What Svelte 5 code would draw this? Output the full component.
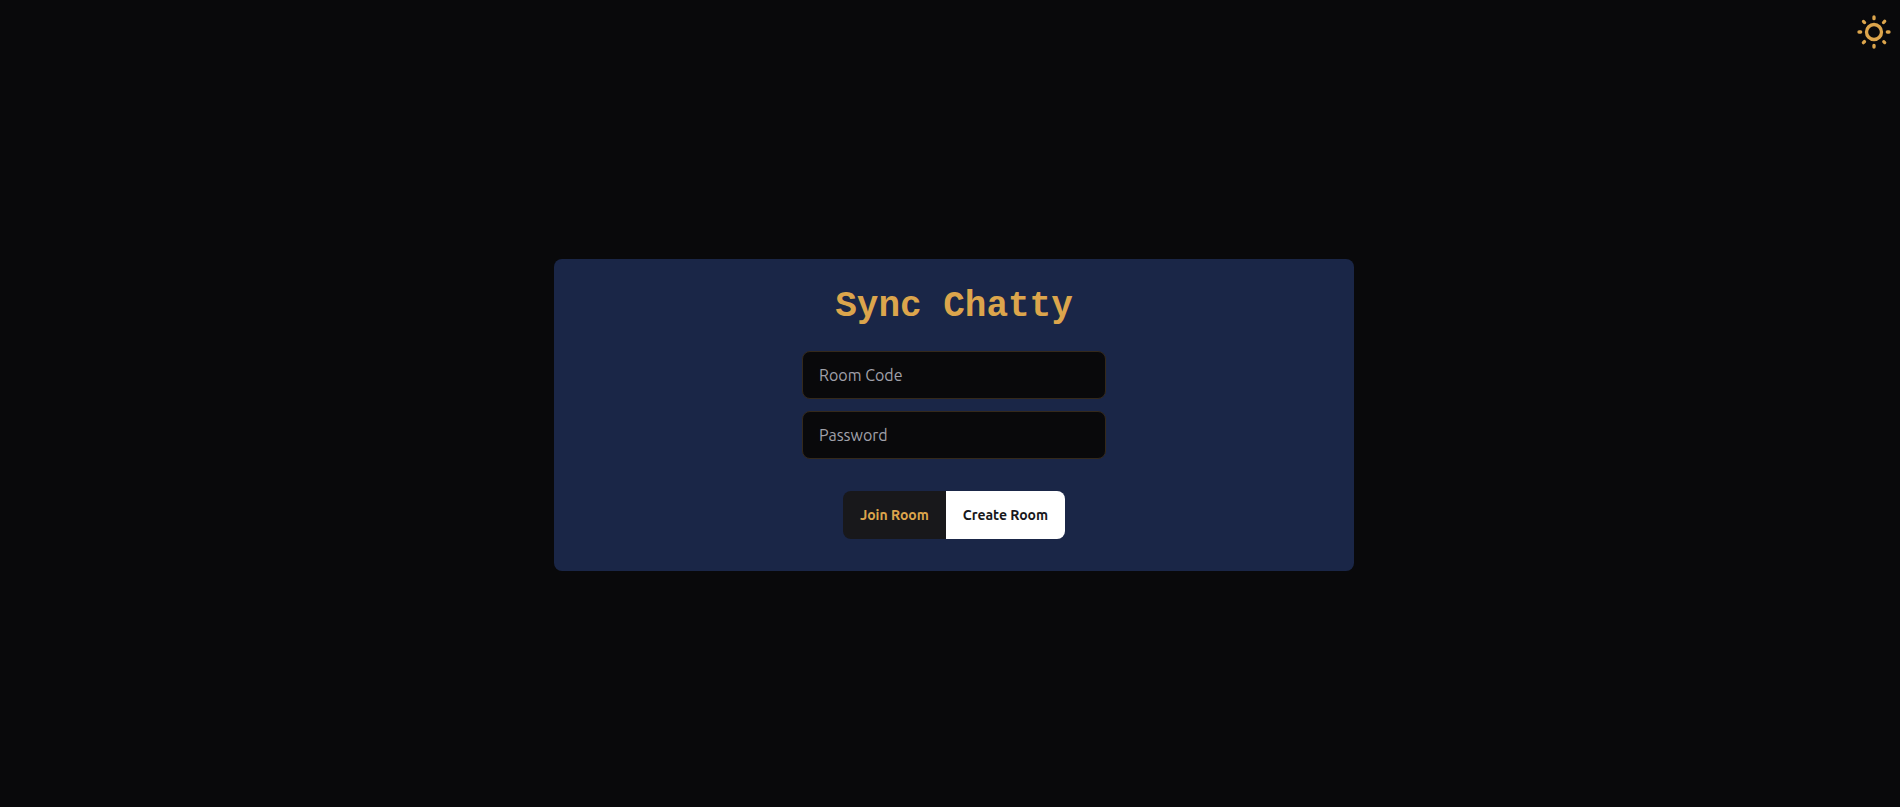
<script>
  let room = $state('');
  let password = $state('');
</script>

<div class="page">
  <header>
    <button class="theme" type="button" aria-label="Toggle theme">
      <svg viewBox="0 0 24 24" width="40" height="40" fill="currentColor" aria-hidden="true">
        <path d="M5.64,17l-.71.71a1,1,0,0,0,0,1.41,1,1,0,0,0,1.41,0l.71-.71A1,1,0,0,0,5.64,17ZM5,12a1,1,0,0,0-1-1H3a1,1,0,0,0,0,2H4A1,1,0,0,0,5,12Zm7-7a1,1,0,0,0,1-1V3a1,1,0,0,0-2,0V4A1,1,0,0,0,12,5ZM5.64,7.05a1,1,0,0,0,.7.29,1,1,0,0,0,.71-.29,1,1,0,0,0,0-1.41l-.71-.71A1,1,0,0,0,4.93,6.34Zm12,.29a1,1,0,0,0,.7-.29l.71-.71a1,1,0,1,0-1.41-1.41L17,5.64a1,1,0,0,0,0,1.41A1,1,0,0,0,17.66,7.34ZM21,11H20a1,1,0,0,0,0,2h1a1,1,0,0,0,0-2Zm-9,8a1,1,0,0,0-1,1v1a1,1,0,0,0,2,0V20A1,1,0,0,0,12,19ZM18.36,17A1,1,0,0,0,17,18.36l.71.71a1,1,0,0,0,1.41,0,1,1,0,0,0,0-1.41ZM12,6.5A5.5,5.5,0,1,0,17.5,12,5.51,5.51,0,0,0,12,6.5Zm0,9A3.5,3.5,0,1,1,15.5,12,3.5,3.5,0,0,1,12,15.5Z" />
      </svg>
    </button>
  </header>
  <main>
    <form class="card" onsubmit={(e) => e.preventDefault()}>
      <h1>Sync Chatty</h1>
      <div class="fields">
        <input type="text" aria-label="Room Code" placeholder="Room Code" bind:value={room} />
        <input type="password" aria-label="Password" placeholder="Password" bind:value={password} />
      </div>
      <div class="actions">
        <button class="join" type="submit">Join Room</button>
        <button class="create" type="button">Create Room</button>
      </div>
    </form>
  </main>
</div>

<style>
  :global(body) {
    margin: 0;
    background: #09090b;
  }
  .page {
    box-sizing: border-box;
    min-height: 100vh;
    display: flex;
    flex-direction: column;
    color: #dca54c;
    font-family: Ubuntu, 'Noto Sans', sans-serif;
  }
  header {
    display: flex;
    justify-content: flex-end;
    padding: 12px 6px 0 0;
  }
  button {
    border: 0;
    font-family: inherit;
    cursor: pointer;
  }
  .theme {
    padding: 0;
    background: none;
    color: inherit;
  }
  .theme svg {
    display: block;
  }
  main {
    flex: 1;
    display: flex;
    align-items: center;
    justify-content: center;
    padding: 0 0 30px 8px;
  }
  .card {
    box-sizing: border-box;
    width: 100%;
    max-width: 800px;
    display: flex;
    flex-direction: column;
    align-items: center;
    padding: 28px 32px 32px;
    border-radius: 8px;
    background: #1a2647;
  }
  h1 {
    margin: 0 0 24px;
    font: 700 36px/40px 'Liberation Mono', monospace;
  }
  .fields {
    width: 100%;
    max-width: 304px;
    display: grid;
    gap: 12px;
  }
  input {
    box-sizing: border-box;
    width: 100%;
    height: 48px;
    padding: 0 16px;
    border: 1px solid #34291b;
    border-radius: 8px;
    background: #09090b;
    color: inherit;
    font-family: inherit;
    font-size: 16px;
  }
  input::placeholder {
    color: #a1a1aa;
    opacity: 1;
  }
  .actions {
    display: flex;
    margin-top: 32px;
    border-radius: 8px;
    overflow: hidden;
  }
  .actions button {
    height: 48px;
    padding: 0 17px;
    font-size: 14px;
    font-weight: 700;
  }
  .join {
    background: #18181b;
    color: #dca54c;
  }
  .create {
    background: #fff;
    color: #18181b;
  }
</style>
